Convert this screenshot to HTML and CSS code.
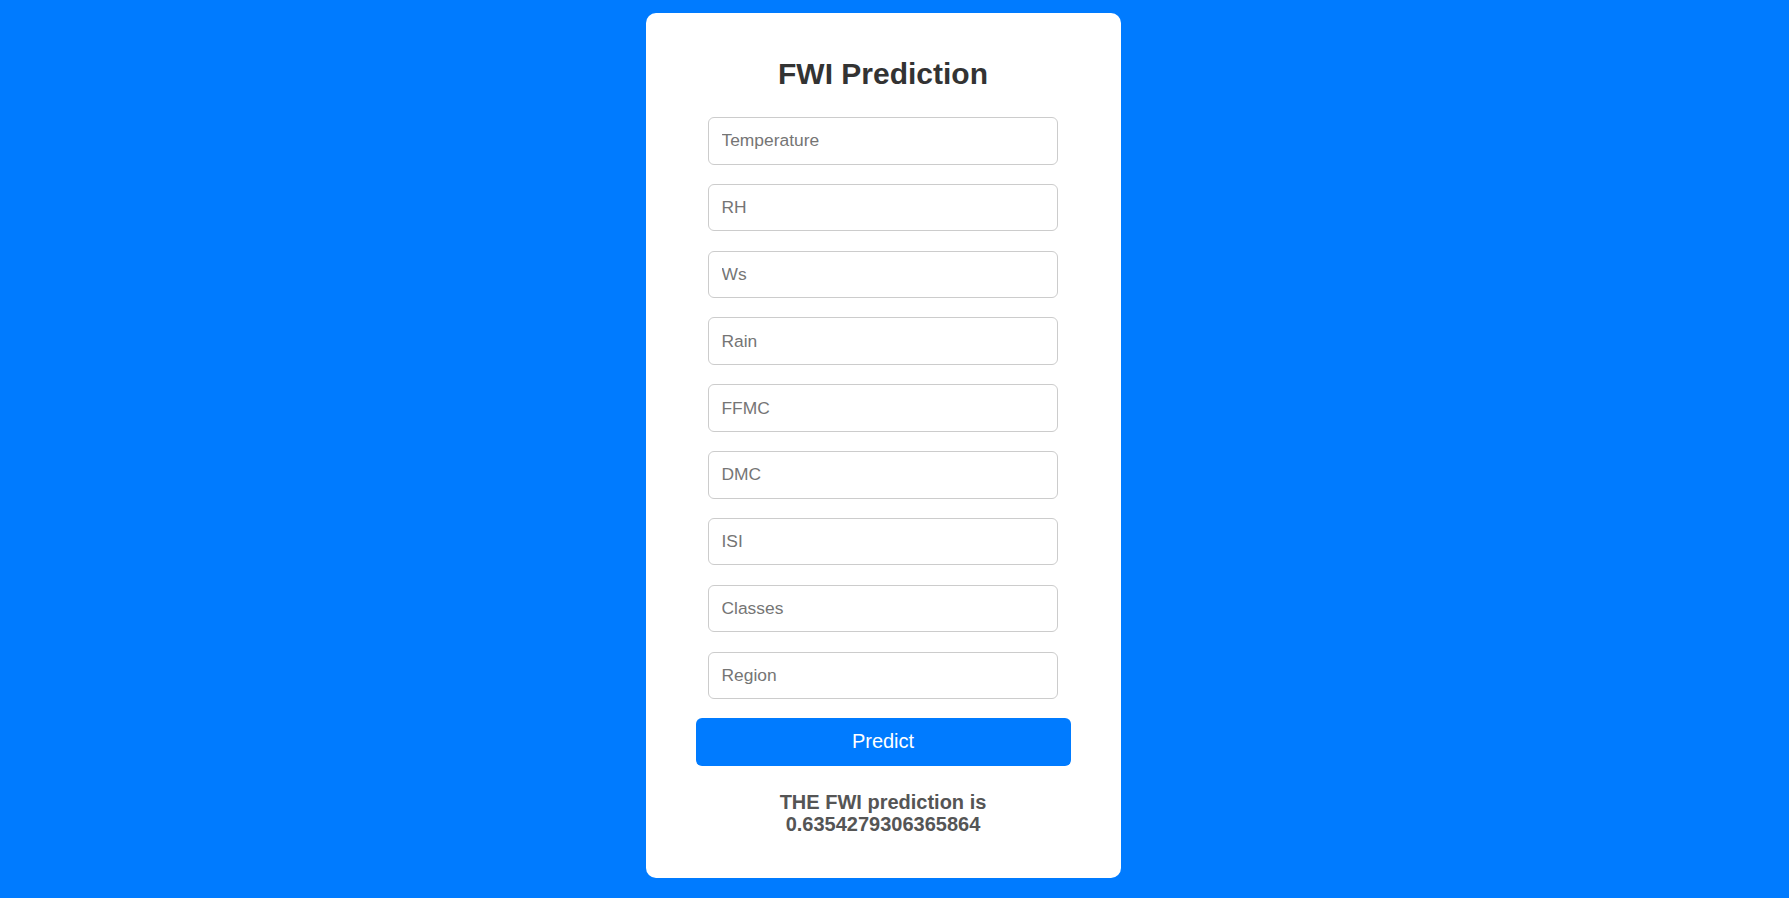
FILE: index.html
```html
<!DOCTYPE html>
<html lang="en">
<head>
<meta charset="utf-8">
<title>FWI Prediction</title>
<link rel="stylesheet" href="styles.css">
</head>
<body>
<div class="page">
  <div class="card">
    <h2 class="title">FWI Prediction</h2>
    <form class="form" onsubmit="return false">
      <input class="field" type="text" placeholder="Temperature">
      <input class="field" type="text" placeholder="RH">
      <input class="field" type="text" placeholder="Ws">
      <input class="field" type="text" placeholder="Rain">
      <input class="field" type="text" placeholder="FFMC">
      <input class="field" type="text" placeholder="DMC">
      <input class="field" type="text" placeholder="ISI">
      <input class="field" type="text" placeholder="Classes">
      <input class="field" type="text" placeholder="Region">
      <button class="btn" type="submit">Predict</button>
    </form>
    <p class="result">THE FWI prediction is 0.6354279306365864</p>
  </div>
</div>
</body>
</html>
```

FILE: styles.css
```css
html, body {
  margin: 0;
  padding: 0;
  height: 100%;
}
body {
  background: #007bff;
  font-family: "Liberation Sans", Arial, sans-serif;
}
.page {
  display: flex;
  justify-content: center;
  align-items: flex-start;
  padding: 13px 23px 0 0;
}
.card {
  box-sizing: border-box;
  width: 475px;
  background: #fff;
  border-radius: 10px;
  padding: 44px 50px 42px;
}
.title {
  margin: 0 0 26px;
  text-align: center;
  font-size: 30px;
  line-height: 34px;
  font-weight: bold;
  color: #333;
}
.form {
  display: flex;
  flex-direction: column;
  align-items: center;
}
.field {
  box-sizing: border-box;
  width: 350px;
  height: 47.5px;
  margin: 0 0 19.34px;
  padding: 0 12.5px;
  border: 1px solid #ccc;
  border-radius: 6px;
  font-family: "Liberation Sans", Arial, sans-serif;
  font-size: 17.4px;
  color: #333;
  background: #fff;
  outline: none;
}
.field::placeholder {
  color: #757575;
}
.btn {
  box-sizing: border-box;
  width: 375px;
  height: 47.5px;
  margin: 0;
  padding: 0 0 2px;
  border: none;
  border-radius: 6px;
  background: #007bff;
  color: #fff;
  font-family: "Liberation Sans", Arial, sans-serif;
  font-size: 20px;
  cursor: pointer;
}
.result {
  margin: 25px 0 0;
  text-align: center;
  font-size: 20px;
  line-height: 22.5px;
  font-weight: bold;
  color: #555;
}
```
